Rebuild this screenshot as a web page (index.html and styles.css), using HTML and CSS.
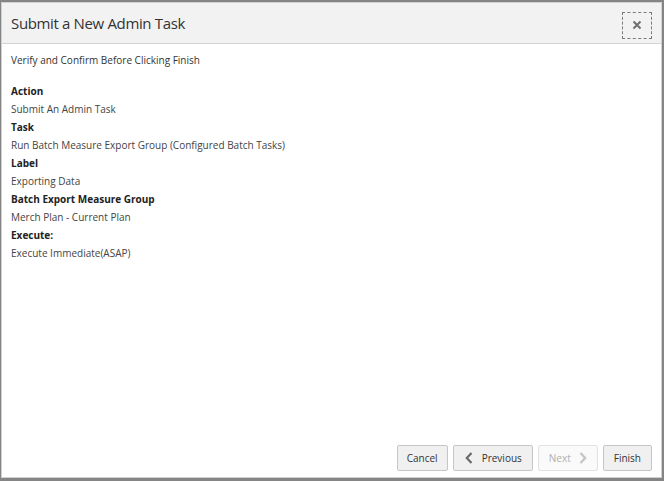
FILE: index.html
```html
<!DOCTYPE html>
<html lang="en">
<head>
<meta charset="utf-8">
<title>Submit a New Admin Task</title>
<link rel="stylesheet" href="styles.css">
</head>
<body>
<div class="dialog">
  <div class="header">
    <h1 class="title">Submit a New Admin Task</h1>
    <button class="close" aria-label="Close">
      <svg width="10" height="10" viewBox="0 0 10 10"><path d="M1.5 1.5 L8.5 8.5 M8.5 1.5 L1.5 8.5" stroke="#6f6f6f" stroke-width="2" fill="none"/></svg>
    </button>
  </div>
  <div class="body">
    <p class="intro">Verify and Confirm Before Clicking Finish</p>
    <dl class="summary">
      <dt>Action</dt>
      <dd>Submit An Admin Task</dd>
      <dt>Task</dt>
      <dd>Run Batch Measure Export Group (Configured Batch Tasks)</dd>
      <dt>Label</dt>
      <dd>Exporting Data</dd>
      <dt>Batch Export Measure Group</dt>
      <dd>Merch Plan - Current Plan</dd>
      <dt>Execute:</dt>
      <dd>Execute Immediate(ASAP)</dd>
    </dl>
  </div>
  <div class="footer">
    <button class="btn btn-cancel">Cancel</button>
    <button class="btn btn-prev">
      <svg class="chev" width="8" height="12" viewBox="0 0 8 12"><path d="M6.5 1 L1.8 6 L6.5 11" stroke="#6a6a6a" stroke-width="2.2" fill="none"/></svg>
      Previous
    </button>
    <button class="btn btn-next" disabled>
      Next
      <svg class="chev" width="8" height="12" viewBox="0 0 8 12"><path d="M1.5 1 L6.2 6 L1.5 11" stroke="#c4c4c4" stroke-width="2.2" fill="none"/></svg>
    </button>
    <button class="btn">Finish</button>
  </div>
</div>
</body>
</html>
```

FILE: styles.css
```css
html, body {
  margin: 0;
  padding: 0;
}
body {
  background: #858585;
  width: 664px;
  height: 481px;
  padding: 2px 0 0 1px;
  box-sizing: border-box;
  font-family: "Open Sans", "Noto Sans", sans-serif;
  color: #333333;
}
.dialog {
  width: 661px;
  height: 476px;
  background: #ffffff;
  border: 1px solid #d0d0d0;
  box-sizing: border-box;
  display: flex;
  flex-direction: column;
}
.header {
  height: 41px;
  background: #f2f2f2;
  border-bottom: 1px solid #d3d3d3;
  display: flex;
  align-items: center;
  justify-content: space-between;
  padding: 0 9px 0 9px;
  box-sizing: border-box;
  flex: none;
}
.title {
  margin: 0;
  font-size: 15px;
  font-weight: 400;
  color: #333333;
  letter-spacing: -0.35px;
}
.close {
  width: 30px;
  height: 27px;
  border: 1px dashed #7a7a7a;
  background: #f2f2f2;
  padding: 0;
  margin-top: 4px;
  display: flex;
  align-items: center;
  justify-content: center;
}
.body {
  flex: 1;
  padding: 7px 9px 0 9px;
  font-size: 10px;
  line-height: 18px;
}
.intro {
  margin: 0 0 13px 0;
}
.summary {
  margin: 0;
}
.summary dt {
  font-weight: 700;
  color: #222222;
}
.summary dd {
  margin: 0;
  color: #444444;
}
.footer {
  flex: none;
  display: flex;
  justify-content: flex-end;
  gap: 5px;
  padding: 0 9px 6px 0;
}
.btn {
  height: 26px;
  padding: 0 10px;
  border: 1px solid #c6c6c6;
  border-radius: 2px;
  background: #f0f0f0;
  font-family: "Open Sans", "Noto Sans", sans-serif;
  font-size: 10px;
  color: #333333;
  display: flex;
  align-items: center;
  gap: 8px;
}
.btn-cancel {
  padding: 0 9px;
}
.btn-prev {
  padding: 0 10px 0 11px;
  gap: 9px;
}
.btn-next {
  background: #fafafa;
  border-color: #e2e2e2;
  color: #b0b0b0;
}
```
